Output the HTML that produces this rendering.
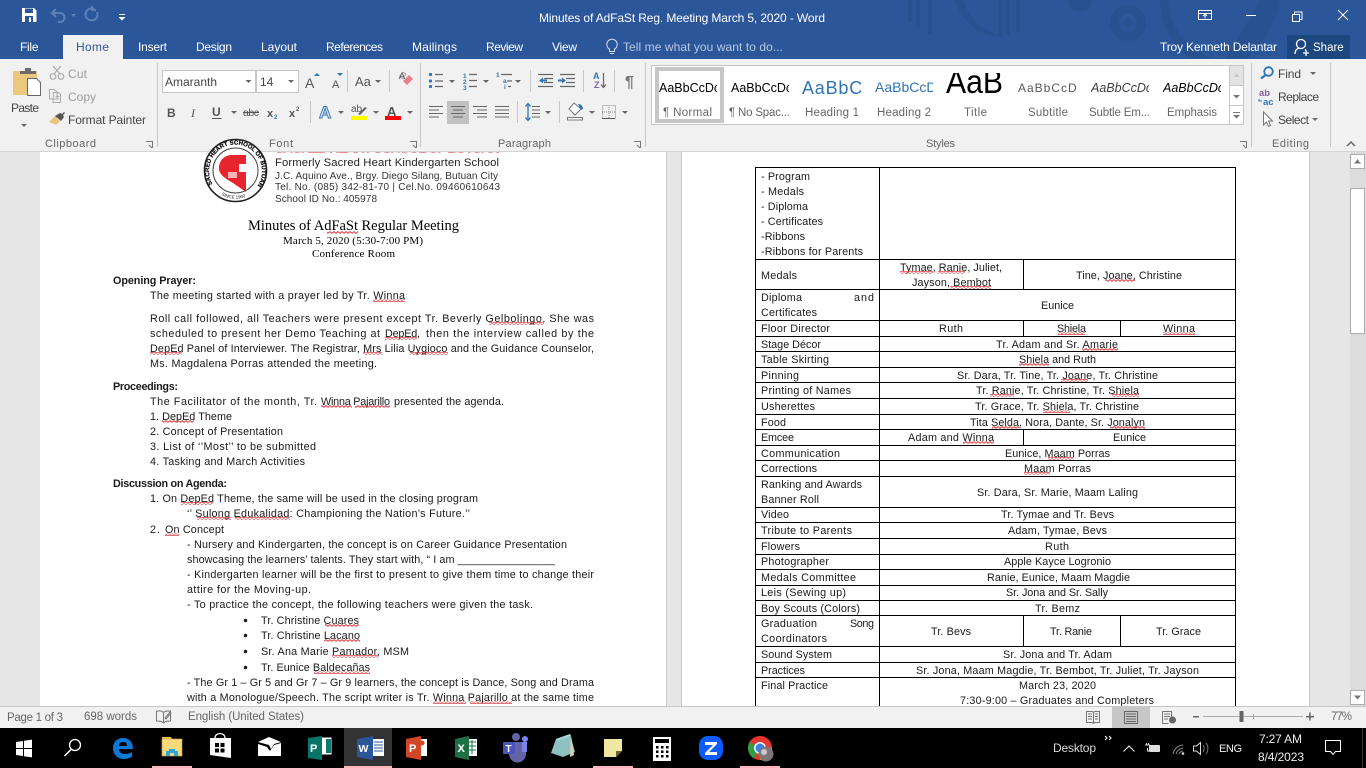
<!DOCTYPE html>
<html><head><meta charset="utf-8"><title>Minutes of AdFaSt Reg. Meeting March 5, 2020 - Word</title>
<style>
html,body{margin:0;padding:0;width:1366px;height:768px;overflow:hidden;background:#e6e6e6}
svg{display:block;font-family:"Liberation Sans",sans-serif}
.d text{font-size:10.8px;fill:#1a1a1a}
.t text{font-size:12px;fill:#fff}
.r text{font-size:12px;fill:#444}
.l text{font-size:11px;fill:#666}
.s text{font-size:11.5px;fill:#666}
.g{stroke:#666;stroke-width:1.2;fill:none}
.b{fill:#2e75b6}
</style></head><body>
<svg width="1366" height="768" viewBox="0 0 1366 768" xmlns="http://www.w3.org/2000/svg">
<defs>
<pattern id="w" width="4" height="3" patternUnits="userSpaceOnUse"><polyline points="0,2.4 2,0.6 4,2.4" fill="none" stroke="#d8262c" stroke-width=".9"/></pattern>
<clipPath id="hc"><rect x="200" y="152" width="320" height="60"/></clipPath>
<path id="ringTop" d="M213 185a26.500 26.500 0 1 1 45 0"/>
<path id="ringBot" d="M212 186a28 28 0 0 0 47 0"/>
</defs>

<!-- Title bar -->
<rect width="1366" height="59" fill="#2b579a"/>
<g fill="#285190">
<rect x="908" y="0" width="4" height="22"/><rect x="916" y="0" width="4" height="28"/><rect x="928" y="0" width="4" height="34"/>
<path d="M955 0h8c6 18 16 28 30 32l6 5c-22-2-38-16-44-37z"/>
<rect x="998" y="0" width="4" height="37"/><rect x="1006" y="0" width="4" height="35"/><rect x="1016" y="0" width="4" height="32"/>
<circle cx="1080" cy="0" r="12"/>
<path d="M1128 5a18 18 0 1 0 .1 0zm0 9a9 9 0 1 1-.1 0z" fill-rule="evenodd"/>
<circle cx="1128" cy="23" r="4.500"/>
<path d="M1160 0h8c2 28 20 52 46 58h-22c-20-10-32-32-32-58zM1260 0h20c-2 16-10 34-22 46l-12 13h-20z"/>
</g>
<!-- QAT -->
<path d="M22 8h12l2.500 2.500V22H22z" fill="#fff"/><rect x="25" y="8.500" width="8" height="4.500" fill="#2b579a"/><rect x="25" y="16" width="8" height="6" fill="#2b579a"/><rect x="29" y="17.500" width="2" height="4.500" fill="#fff"/>
<g fill="none" stroke="#5d80b8" stroke-width="2"><path d="M56 9l-4 4 4 4M52 13h8a4.500 4.500 0 0 1 0 9h-2"/><path d="M97 12a6 6 0 1 1-3-3M92 6v4h4"/></g>
<path d="M71 14h5l-2.500 3z" fill="#5d80b8"/>
<rect x="119" y="14" width="6" height="1" fill="#fff"/><path d="M118.500 17h7l-3.500 3.500z" fill="#fff"/>
<g class="t">
<text x="539" y="22" textLength="286">Minutes of AdFaSt Reg. Meeting March 5, 2020 - Word</text>
<text x="20" y="51" textLength="18.500">File</text>
<text x="138" y="51" textLength="29">Insert</text>
<text x="196" y="51" textLength="36">Design</text>
<text x="261" y="51" textLength="36">Layout</text>
<text x="326" y="51" textLength="57">References</text>
<text x="412" y="51" textLength="45">Mailings</text>
<text x="486" y="51" textLength="37">Review</text>
<text x="552" y="51" textLength="25">View</text>
<text x="623" y="51" textLength="160" style="fill:#b9c9e2">Tell me what you want to do...</text>
<text x="1160" y="51" textLength="117">Troy Kenneth Delantar</text>
</g>
<rect x="63" y="35" width="60" height="24" fill="#f1f1f1"/>
<text x="76" y="51" textLength="33" font-size="12" fill="#2b579a">Home</text>
<g fill="none" stroke="#d4dfef" stroke-width="1"><path d="M609.500 49a5.200 5.200 0 1 1 5 0v2.500h-5zM610 53.500h4"/></g>
<rect x="1287" y="35" width="63" height="24" fill="#1c477f"/>
<text x="1313" y="51" font-size="11.500" fill="#fff">Share</text>
<g fill="none" stroke="#fff" stroke-width="1.300"><circle cx="1301" cy="44" r="4.500"/><path d="M1295 54c0-4 2.500-5.500 4-6M1305 49.500l1 .5M1303 53h6M1306 50v6"/></g>
<!-- Window buttons -->
<g fill="none" stroke="#fff" stroke-width="1"><rect x="1198.500" y="10.500" width="13" height="9"/><path d="M1198.500 13.500h13M1205 18.500v-4M1203 16l2-2 2 2"/><path d="M1246 15.500h10"/><path d="M1292.500 14.500h7v7h-7zM1294.500 14.500v-2.500h7.500v7.500h-2.500"/><path d="M1338 10l10 10M1348 10l-10 10"/></g>

<!-- Ribbon -->
<rect y="59" width="1366" height="92" fill="#f1f1f1"/>
<rect y="151" width="1366" height="1" fill="#d4d4d4"/>
<g fill="#c6c6c6"><rect x="157" y="63" width="1" height="84"/><rect x="420" y="63" width="1" height="84"/><rect x="645" y="63" width="1" height="84"/><rect x="1251" y="63" width="1" height="84"/><rect x="1330" y="63" width="1" height="84"/>
<rect x="347" y="70" width="1" height="22"/><rect x="389" y="70" width="1" height="22"/><rect x="310" y="101" width="1" height="22"/>
<rect x="530" y="70" width="1" height="22"/><rect x="583" y="70" width="1" height="22"/><rect x="614" y="70" width="1" height="22"/><rect x="517" y="101" width="1" height="22"/><rect x="559" y="101" width="1" height="22"/></g>
<!-- Clipboard -->
<rect x="13" y="71" width="24" height="24" rx="1" fill="#ecc77e"/>
<path d="M20 71h5v-3h6v3h5v3H20z" fill="#6b6b6b"/>
<path d="M27.500 78.500h9l4 4v13h-13z" fill="#fff" stroke="#666"/>
<path d="M21 124h6l-3 3z" fill="#666"/>
<g fill="none" stroke="#ababab" stroke-width="1.200"><circle cx="53" cy="76.500" r="2.800"/><circle cx="61" cy="76.500" r="2.800"/><path d="M54 74l7-8M60 74l-7-8"/></g>
<g fill="none" stroke="#ababab"><path d="M49.500 89.500h5l2.500 2.500v7h-7.500zM49.500 89.500v10M53.500 92.500h5l2 2v8h-7.500zM55.500 96.500h4M55.500 99h4"/></g>
<path d="M49 122l6-6 5 5-4 4z" fill="#eac67c"/><path d="M55 116l5-3 2 1 2-2 1 1-2 2 1 2-3 4z" fill="#555"/>
<!-- Font group boxes -->
<rect x="162.500" y="70.500" width="93" height="22" fill="#fff" stroke="#c6c6c6"/>
<rect x="256.500" y="70.500" width="42" height="22" fill="#fff" stroke="#c6c6c6"/>
<g class="r">
<text x="11" y="112" textLength="28">Paste</text>
<text x="68" y="78" textLength="19" style="fill:#9d9d9d">Cut</text>
<text x="68" y="101" textLength="28" style="fill:#9d9d9d">Copy</text>
<text x="68" y="124" textLength="78">Format Painter</text>
<text x="165" y="86" textLength="52">Amaranth</text>
<text x="260" y="86">14</text>
</g>
<g class="l">
<text x="45" y="147" textLength="51">Clipboard</text>
<text x="269" y="147" textLength="24">Font</text>
<text x="498" y="147" textLength="53">Paragraph</text>
<text x="926" y="147" textLength="29">Styles</text>
<text x="1272" y="147" textLength="37">Editing</text>
</g>
<g fill="none" stroke="#777"><path d="M146 141.500h6.500v6.500M149 145l3 3"/><path d="M410 141.500h6.500v6.500M413 145l3 3"/><path d="M634 141.500h6.500v6.500M637 145l3 3"/><path d="M1240 141.500h6.500v6.500M1243 145l3 3"/></g>
<g fill="#666">
<path d="M245.500 80h6l-3 3z"/><path d="M288 80h6l-3 3z"/>
<path d="M375 80h6l-3 3z"/>
<path d="M231 111h6l-3 3z"/><path d="M338 111h6l-3 3z"/><path d="M373 111h6l-3 3z"/><path d="M407 111h6l-3 3z"/>
<path d="M449 80h6l-3 3z"/><path d="M483 80h6l-3 3z"/><path d="M515 80h6l-3 3z"/>
<path d="M545 111h6l-3 3z"/><path d="M589 111h6l-3 3z"/><path d="M622 111h6l-3 3z"/>
<path d="M1310 72h6l-3 3z"/><path d="M1312 118h6l-3 3z"/>
</g>
<g font-weight="400" fill="#555">
<text x="305" y="88" font-size="14">A</text><text x="332" y="88" font-size="11">A</text>
<text x="355" y="86" font-size="13">Aa</text>
<text x="167" y="117" font-size="12" font-weight="700">B</text>
<text x="191" y="117" font-size="12" font-style="italic" font-family="Liberation Serif">I</text>
<text x="212" y="116" font-size="12" font-weight="700">U</text>
<text x="243" y="116" font-size="10.500" textLength="16">abc</text>
<text x="267" y="117" font-size="11" font-weight="700">x</text><text x="274" y="119" font-size="6" fill="#2e75b6" font-weight="700">2</text>
<text x="289" y="117" font-size="11" font-weight="700">x</text><text x="296" y="111" font-size="6" font-weight="700">2</text>
</g>
<rect x="212" y="118" width="9.500" height="1" fill="#555"/>
<rect x="243" y="112" width="16" height="1" fill="#555"/>
<path d="M314 76h6l-3-3zM337 73h6l-3 3z" fill="#2e75b6"/>
<text x="319" y="118" font-size="17" font-weight="700" fill="#dbe8f6" stroke="#2e75b6" stroke-width=".9">A</text>
<text x="351" y="112" font-size="10" fill="#555">ab</text><path d="M358 114l7-7 2 1-7 7z" fill="#666"/><rect x="351" y="116" width="16" height="4" fill="#ff0"/>
<text x="387" y="116" font-size="13" font-weight="700" fill="#555">A</text><rect x="385" y="116" width="16" height="4" fill="#f00"/>
<path d="M403 81l6-6 4 4-6 6z" fill="#e8808b"/><path d="M399 77l4-5 3 2-3 5z" fill="#ddd" stroke="#888" stroke-width=".6"/>
<text x="399" y="79" font-size="9" fill="#555">A</text>
<!-- Paragraph -->
<g class="b"><circle cx="430.500" cy="74.500" r="1.600"/><circle cx="430.500" cy="81" r="1.600"/><circle cx="430.500" cy="86.500" r="1.600"/>
<text x="463" y="78" font-size="6.500" font-weight="700">1</text><text x="463" y="84" font-size="6.500" font-weight="700">2</text><text x="463" y="90" font-size="6.500" font-weight="700">3</text>
<text x="496" y="77" font-size="6.500" font-weight="700">1</text><text x="503" y="83" font-size="6.500" font-weight="700">a</text><text x="504" y="89" font-size="6.500" font-weight="700">i</text></g>
<path d="M435 74.500h8M435 81h8M435 86.500h8M469 74.500h8M469 80.500h8M469 86.500h8M501 74.500h11M507 81h5M508 86.500h3M538 74.500h15M544 78.500h9M544 82.500h9M538 86.500h15M560 74.500h15M566 78.500h9M566 82.500h9M560 86.500h15" class="g" stroke-width="1"/>
<path d="M539 80.500l4-3v2h4v2h-4v2zM566 80.500l-4-3v2h-4v2h4v2z" class="b"/>
<text x="593" y="79" font-size="9" font-weight="700" fill="#2e75b6">A</text><text x="594" y="88" font-size="9" font-weight="700" fill="#8064a2">Z</text>
<path d="M603.500 73v14M601 84.500l2.500 3 2.500-3" class="g"/>
<text x="625" y="87" font-size="16" font-weight="700" fill="#777">¶</text>
<rect x="447" y="101" width="22" height="23" fill="#c2c2c2"/>
<path d="M429 106.500h14M429 110h10M429 113.500h14M429 117h10M451 106.500h14M453 110h10M451 113.500h14M453 117h10M473 106.500h14M477 110h10M473 113.500h14M477 117h10M495 106.500h14M495 110h14M495 113.500h14M495 117h14" stroke="#666" stroke-width="1.100" fill="none"/>
<path d="M532 106.500h8M532 110h8M532 113.500h8M532 117h8" stroke="#666" stroke-width="1.100" fill="none"/>
<path d="M528 104v16M525.500 106.500l2.500-3 2.500 3M525.500 117.500l2.500 3 2.500-3" stroke="#2e75b6" stroke-width="1.300" fill="none"/>
<path d="M574 103l7 6-6 6-6-6zM567.500 117.500h15v2.500h-15z" fill="#fff" stroke="#777"/><path d="M578 104c3 0 5 2 5 5l-2 1z" fill="#2e75b6"/>
<rect x="602.500" y="105.500" width="13" height="13" fill="none" stroke="#888" stroke-dasharray="1 1"/><path d="M609 105v13M602 112h13" stroke="#888" stroke-dasharray="1 1"/><path d="M602 118.500h13" stroke="#555"/>

<!-- Styles gallery -->
<rect x="651.500" y="65.500" width="592" height="59" fill="#fff" stroke="#c6c6c6"/>
<rect x="657" y="69" width="65" height="52" fill="#fff" stroke="#c6c6c6" stroke-width="4"/>
<svg x="659" y="70" width="58" height="30"><text x="0" y="22" font-size="12.500" fill="#000">AaBbCcDc</text></svg>
<svg x="731" y="70" width="58" height="30"><text x="0" y="22" font-size="12.500" fill="#000">AaBbCcDc</text></svg>
<svg x="802" y="70" width="59" height="30"><text x="0" y="24" font-size="18" fill="#2e74b5" textLength="70">AaBbCc</text></svg>
<svg x="875" y="70" width="58" height="30"><text x="0" y="22" font-size="14" fill="#2e74b5">AaBbCcD</text></svg>
<svg x="946" y="73" width="58" height="26"><text x="0" y="20" font-size="33" fill="#000" textLength="57" lengthAdjust="spacingAndGlyphs">AaB</text></svg>
<svg x="1018" y="70" width="59" height="30"><text x="0" y="22" font-size="12" fill="#5a5a5a" letter-spacing="1">AaBbCcD</text></svg>
<svg x="1091" y="70" width="58" height="30"><text x="0" y="22" font-size="12.500" fill="#404040" font-style="italic">AaBbCcDc</text></svg>
<svg x="1163" y="70" width="58" height="30"><text x="0" y="22" font-size="12.500" fill="#000" font-style="italic">AaBbCcDc</text></svg>
<g class="s">
<text x="663" y="116" textLength="49">¶ Normal</text>
<text x="729" y="116" textLength="61">¶ No Spac...</text>
<text x="805" y="116" textLength="54">Heading 1</text>
<text x="877" y="116" textLength="54">Heading 2</text>
<text x="964" y="116" textLength="23">Title</text>
<text x="1028" y="116" textLength="40">Subtitle</text>
<text x="1089" y="116" textLength="61">Subtle Em...</text>
<text x="1167" y="116" textLength="50">Emphasis</text>
</g>
<rect x="1229.500" y="65.500" width="14" height="20" fill="#e3e3e3" stroke="#c6c6c6"/>
<rect x="1229.500" y="85.500" width="14" height="20" fill="#fff" stroke="#c6c6c6"/>
<rect x="1229.500" y="105.500" width="14" height="19" fill="#fff" stroke="#c6c6c6"/>
<path d="M1233.500 77l3-3.500 3 3.500z" fill="#c6c6c6"/><path d="M1233 95h7l-3.500 3.500z" fill="#777"/><path d="M1233 112h7v1h-7zM1233 115h7l-3.500 3.500z" fill="#777"/>
<!-- Editing -->
<circle cx="1268.500" cy="71.500" r="4.300" fill="none" stroke="#2e75b6" stroke-width="1.800"/><path d="M1265.500 75l-4.500 3.500" stroke="#2e75b6" stroke-width="2.200"/>
<g class="r"><text x="1278" y="78" textLength="23">Find</text><text x="1278" y="101" textLength="41">Replace</text><text x="1278" y="124" textLength="31">Select</text></g>
<text x="1259" y="96" font-size="9.500" font-weight="700" fill="#8064a2">ab</text><text x="1263" y="105" font-size="9.500" font-weight="700" fill="#2e75b6">ac</text><path d="M1259 99v2h3" stroke="#2e75b6" fill="none"/>
<path d="M1263.500 112v13l3-3 2 4.500 2-1-2-4.500h4z" fill="#fff" stroke="#777"/>
<path d="M1347 146l4-4 4 4" fill="none" stroke="#666" stroke-width="1.500"/>

<!-- Document area -->
<rect y="152" width="1350" height="555" fill="#e6e6e6"/>
<rect x="40" y="152" width="627" height="555" fill="#fff"/>
<rect x="666" y="152" width="1" height="555" fill="#c9c9c9"/>
<rect x="681" y="152" width="1" height="555" fill="#c9c9c9"/>
<rect x="682" y="152" width="627" height="555" fill="#fff"/>
<rect x="1309" y="152" width="1" height="555" fill="#c9c9c9"/>
<rect x="1350" y="152" width="16" height="555" fill="#dcdcdc"/>
<rect x="1350.500" y="154.500" width="14" height="14" fill="#fff" stroke="#ababab"/><path d="M1353.500 163.500h8l-2-1.500-2-3-2 3z" fill="#777"/>
<rect x="1350.500" y="188.500" width="14" height="145" fill="#fff" stroke="#ababab"/>
<rect x="1350.500" y="690.500" width="14" height="14" fill="#fff" stroke="#ababab"/><path d="M1354 695.500h7l-3.500 4z" fill="#777"/>

<!-- Letterhead -->
<circle cx="235.500" cy="170.500" r="31" fill="#fff" stroke="#222" stroke-width="1.600"/>
<circle cx="235.500" cy="170.500" r="22.500" fill="#fff" stroke="#444" stroke-width="1"/>
<path d="M219 168c0-8 6-13 13-13h14v9h-7v8h7v20l-13-9c-8-5-14-8-14-15z" fill="#e8242e"/>
<rect x="228" y="172" width="9" height="6" fill="#fff" opacity=".65"/>
<text font-size="6" font-weight="700" fill="#111" stroke="#111" stroke-width=".25"><textPath href="#ringTop" startOffset="1">SACRED HEART SCHOOL OF BUTUAN</textPath></text>
<text font-size="4.500" fill="#222"><textPath href="#ringBot" startOffset="13">SINCE 1960</textPath></text>
<g clip-path="url(#hc)"><text x="275" y="153" font-size="14" font-weight="700" fill="#ee4a50" opacity=".65" textLength="225">SACRED HEART SCHOOL OF BUTUAN</text></g>
<g fill="#333"><text x="275" y="166" font-size="11.300" textLength="224" fill="#222">Formerly Sacred Heart Kindergarten School</text>
<text x="275" y="179" font-size="10" textLength="223" font-weight="400">J.C. Aquino Ave., Brgy. Diego Silang, Butuan City</text>
<text x="275" y="190" font-size="10" textLength="225">Tel. No. (085) 342-81-70 | Cel.No. 09460610643</text>
<text x="275" y="202" font-size="10" textLength="102">School ID No.: 405978</text></g>
<g font-family="Liberation Serif" fill="#000">
<text x="248" y="230" font-size="14.500" textLength="211">Minutes of AdFaSt Regular Meeting</text>
<text x="283" y="244" font-size="11" textLength="140">March 5, 2020 (5:30-7:00 PM)</text>
<text x="312" y="257" font-size="11" textLength="83">Conference Room</text>
</g>

<!-- Page 1 -->
<g class="d">
<text x="113" y="284" textLength="83" font-weight="700">Opening Prayer:</text>
<text x="150" y="299" textLength="255">The meeting started with a prayer led by Tr. Winna</text>
<text x="150" y="322" textLength="444">Roll call followed, all Teachers were present except Tr. Beverly Gelbolingo. She was</text>
<text x="150" y="337" textLength="230">scheduled to present her Demo Teaching at</text><text x="385" y="337" textLength="35">DepEd,</text><text x="426" y="337" textLength="168">then the interview called by the</text>
<text x="150" y="352" textLength="444">DepEd Panel of Interviewer. The Registrar, Mrs Lilia Uygioco and the Guidance Counselor,</text>
<text x="150" y="367" textLength="227">Ms. Magdalena Porras attended the meeting.</text>
<text x="113" y="390" textLength="65" font-weight="700">Proceedings:</text>
<text x="150" y="405" textLength="167">The Facilitator of the month, Tr.</text><text x="321" y="405" textLength="69">Winna Pajarillo</text><text x="394" y="405" textLength="110">presented the agenda.</text>
<text x="150" y="420" textLength="82">1. DepEd Theme</text>
<text x="150" y="435" textLength="133">2. Concept of Presentation</text>
<text x="150" y="450" textLength="166">3. List of ‘’Most’’ to be submitted</text>
<text x="150" y="465" textLength="155">4. Tasking and March Activities</text>
<text x="113" y="487" textLength="114" font-weight="700">Discussion on Agenda:</text>
<text x="150" y="502" textLength="328">1. On DepEd Theme, the same will be used in the closing program</text>
<text x="187" y="517" textLength="283">‘’ Sulong Edukalidad: Championing the Nation’s Future.’’</text>
<text x="150" y="533" textLength="10">2.</text><text x="165" y="533" textLength="59">On Concept</text>
<text x="187" y="548" textLength="380">- Nursery and Kindergarten, the concept is on Career Guidance Presentation</text>
<text x="187" y="563" textLength="368">showcasing the learners’ talents. They start with, “ I am ________________</text>
<text x="187" y="578" textLength="407">- Kindergarten learner will be the first to present to give them time to change their</text>
<text x="187" y="593" textLength="124">attire for the Moving-up.</text>
<text x="187" y="608" textLength="346">- To practice the concept, the following teachers were given the task.</text>
<text x="261" y="624" textLength="98">Tr. Christine Cuares</text>
<text x="261" y="639" textLength="99">Tr. Christine Lacano</text>
<text x="261" y="655" textLength="148">Sr. Ana Marie Pamador, MSM</text>
<text x="261" y="671" textLength="109">Tr. Eunice Baldecañas</text>
<text x="187" y="686" textLength="407">- The Gr 1 – Gr 5 and Gr 7 – Gr 9 learners, the concept is Dance, Song and Drama</text>
<text x="187" y="701" textLength="407">with a Monologue/Speech. The script writer is Tr. Winna Pajarillo at the same time</text>
</g>
<g fill="#222"><circle cx="245.500" cy="620.500" r="1.800"/><circle cx="245.500" cy="635.500" r="1.800"/><circle cx="245.500" cy="651.500" r="1.800"/><circle cx="245.500" cy="667.500" r="1.800"/></g>
<g fill="url(#w)">
<rect x="373" y="299" width="32" height="3"/><rect x="489" y="322" width="55" height="3"/><rect x="385" y="337" width="32" height="3"/><rect x="150" y="352" width="32" height="3"/><rect x="363" y="352" width="19" height="3"/><rect x="410" y="352" width="38" height="3"/>
<rect x="321" y="405" width="31" height="3"/><rect x="355" y="405" width="35" height="3"/><rect x="162" y="420" width="32" height="3"/><rect x="181" y="502" width="32" height="3"/><rect x="197" y="517" width="34" height="3"/><rect x="235" y="517" width="55" height="3"/><rect x="165" y="533" width="14" height="3"/>
<rect x="325" y="624" width="34" height="3"/><rect x="324" y="639" width="36" height="3"/><rect x="332" y="655" width="46" height="3"/><rect x="314" y="671" width="56" height="3"/>
<rect x="433" y="701" width="33" height="3"/><rect x="470" y="701" width="42" height="3"/>
<rect x="327" y="231" width="31" height="3"/>
</g>

<!-- Table -->
<g stroke="#000" stroke-width="1" fill="none">
<rect x="755.500" y="167.500" width="480" height="540"/>
<path d="M879.500 167v540M1023.500 259v30M1023.500 320v16M1120.500 320v16M1023.500 429v16M1120.500 615v31M1023.500 615v31"/>
<path d="M755 259.500h481M755 289.500h481M755 320.500h481M755 336.500h481M755 351.500h481M755 367.500h481M755 382.500h481M755 398.500h481M755 414.500h481M755 429.500h481M755 445.500h481M755 460.500h481M755 476.500h481M755 507.500h481M755 522.500h481M755 538.500h481M755 554.500h481M755 569.500h481M755 585.500h481M755 600.500h481M755 615.500h481M755 646.500h481M755 662.500h481M755 677.500h481"/>
</g>
<rect x="750" y="707" width="500" height="1" fill="#fff"/>
<g class="d">
<text x="761" y="180" textLength="49">- Program</text><text x="761" y="195" textLength="43">- Medals</text><text x="761" y="210" textLength="47">- Diploma</text><text x="761" y="225" textLength="62">- Certificates</text><text x="761" y="240" textLength="44">-Ribbons</text><text x="761" y="255" textLength="102">-Ribbons for Parents</text>
<text x="761" y="279" textLength="36">Medals</text>
<text x="761" y="301" textLength="41">Diploma</text><text x="854" y="301" textLength="20">and</text><text x="761" y="316" textLength="56">Certificates</text>
<text x="761" y="332" textLength="69">Floor Director</text><text x="761" y="348" textLength="60">Stage Décor</text><text x="761" y="363" textLength="68">Table Skirting</text><text x="761" y="379" textLength="38">Pinning</text><text x="761" y="394" textLength="90">Printing of Names</text><text x="761" y="410" textLength="54">Usherettes</text><text x="761" y="426" textLength="25">Food</text><text x="761" y="441" textLength="33">Emcee</text><text x="761" y="457" textLength="79">Communication</text><text x="761" y="472" textLength="56">Corrections</text>
<text x="761" y="488" textLength="101">Ranking and Awards</text><text x="761" y="503" textLength="58">Banner Roll</text>
<text x="761" y="518" textLength="28">Video</text><text x="761" y="534" textLength="91">Tribute to Parents</text><text x="761" y="550" textLength="39">Flowers</text><text x="761" y="565" textLength="68">Photographer</text><text x="761" y="581" textLength="95">Medals Committee</text><text x="761" y="596" textLength="85">Leis (Sewing up)</text><text x="761" y="612" textLength="99">Boy Scouts (Colors)</text>
<text x="761" y="627" textLength="56">Graduation</text><text x="850" y="627" textLength="24">Song</text><text x="761" y="642" textLength="66">Coordinators</text>
<text x="761" y="658" textLength="71">Sound System</text><text x="761" y="674" textLength="44">Practices</text><text x="761" y="689" textLength="67">Final Practice</text>

<text x="900" y="271" textLength="102">Tymae, Ranie, Juliet,</text><text x="912" y="286" textLength="79">Jayson, Bembot</text><text x="1076" y="279" textLength="106">Tine, Joane, Christine</text>
<text x="1041" y="309" textLength="33">Eunice</text>
<text x="939" y="332" textLength="24">Ruth</text><text x="1057" y="332" textLength="29">Shiela</text><text x="1163" y="332" textLength="32">Winna</text>
<text x="996" y="348" textLength="122">Tr. Adam and Sr. Amarie</text>
<text x="1019" y="363" textLength="77">Shiela and Ruth</text>
<text x="957" y="379" textLength="201">Sr. Dara, Tr. Tine, Tr. Joane, Tr. Christine</text>
<text x="976" y="394" textLength="163">Tr. Ranie, Tr. Christine, Tr. Shiela</text>
<text x="975" y="410" textLength="164">Tr. Grace, Tr. Shiela, Tr. Christine</text>
<text x="970" y="426" textLength="175">Tita Selda, Nora, Dante, Sr. Jonalyn</text>
<text x="908" y="441" textLength="86">Adam and Winna</text><text x="1113" y="441" textLength="33">Eunice</text>
<text x="1005" y="457" textLength="105">Eunice, Maam Porras</text>
<text x="1024" y="472" textLength="67">Maam Porras</text>
<text x="977" y="496" textLength="161">Sr. Dara, Sr. Marie, Maam Laling</text>
<text x="1001" y="518" textLength="113">Tr. Tymae and Tr. Bevs</text>
<text x="1008" y="534" textLength="99">Adam, Tymae, Bevs</text>
<text x="1045" y="550" textLength="24">Ruth</text>
<text x="1004" y="565" textLength="107">Apple Kayce Logronio</text>
<text x="987" y="581" textLength="143">Ranie, Eunice, Maam Magdie</text>
<text x="1006" y="596" textLength="102">Sr. Jona and Sr. Sally</text>
<text x="1035" y="612" textLength="45">Tr. Bemz</text>
<text x="931" y="635" textLength="40">Tr. Bevs</text><text x="1050" y="635" textLength="42">Tr. Ranie</text><text x="1156" y="635" textLength="45">Tr. Grace</text>
<text x="1003" y="658" textLength="109">Sr. Jona and Tr. Adam</text>
<text x="916" y="674" textLength="283">Sr. Jona, Maam Magdie, Tr. Bembot, Tr. Juliet, Tr. Jayson</text>
<text x="1019" y="689" textLength="77">March 23, 2020</text>
<text x="960" y="704" textLength="194">7:30-9:00 – Graduates and Completers</text>
</g>
<g fill="url(#w)">
<rect x="900" y="271" width="33" height="3"/><rect x="938" y="271" width="27" height="3"/><rect x="950" y="286" width="41" height="3"/><rect x="1105" y="279" width="30" height="3"/>
<rect x="1058" y="332" width="27" height="3"/><rect x="1163" y="332" width="32" height="3"/><rect x="1082" y="348" width="36" height="3"/><rect x="1019" y="363" width="30" height="3"/>
<rect x="1061" y="379" width="27" height="3"/><rect x="990" y="394" width="24" height="3"/><rect x="1112" y="394" width="27" height="3"/><rect x="1043" y="410" width="27" height="3"/>
<rect x="992" y="426" width="28" height="3"/><rect x="1110" y="426" width="35" height="3"/><rect x="963" y="441" width="31" height="3"/><rect x="1048" y="457" width="26" height="3"/><rect x="1024" y="472" width="26" height="3"/>
</g>

<!-- Status bar -->
<rect y="706" width="1366" height="1" fill="#c6c6c6"/>
<rect y="707" width="1366" height="21" fill="#f1f1f1"/>
<g class="s" font-size="11.500">
<text x="7" y="721" textLength="56">Page 1 of 3</text>
<text x="84" y="720" textLength="53">698 words</text>
<text x="188" y="720" textLength="116">English (United States)</text>
<text x="1331" y="720" textLength="21">77%</text>
</g>
<path d="M156.500 711.500c2-1 5-1 7 1 1-1 3-1.500 4-1.500l3 0v10c-3 0-5 0-7 2-2-2-4-2-7-2z" fill="none" stroke="#777"/><path d="M163.500 713v9M165 718l5-6 1 1-5 6z" stroke="#777" fill="none"/>
<rect x="1112" y="707" width="38" height="21" fill="#c6c6c6"/>
<path d="M1086.500 711.500h6l1 1 1-1h5v11h-5l-1 1-1-1h-6zM1093.500 712v11M1088 714h4M1088 716.500h4M1088 719h4M1095 714h3M1095 716.500h3M1095 719h3" fill="none" stroke="#777"/>
<rect x="1124.500" y="711.500" width="13" height="12" fill="none" stroke="#666"/><path d="M1126 714h10M1126 716.500h10M1126 719h10M1126 721.500h10" stroke="#666"/>
<path d="M1162.500 711.500h9v6M1162.500 711.500v12h6M1164 714h6M1164 716.500h6M1164 719h4" fill="none" stroke="#777"/><circle cx="1172.500" cy="720" r="3.500" fill="#666"/>
<rect x="1193" y="716" width="6" height="1.500" fill="#666"/>
<rect x="1203" y="716" width="100" height="1" fill="#ababab"/>
<rect x="1253" y="714" width="1" height="5" fill="#ababab"/>
<rect x="1239.500" y="711" width="4" height="11" fill="#666"/>
<path d="M1306 716h8v1.500h-8zM1309.200 712.500h1.500v8h-1.500z" fill="#666"/>

<!-- Taskbar -->
<rect y="728" width="1366" height="40" fill="#000"/>
<rect x="344" y="728" width="48" height="40" fill="#333"/>
<g fill="#ffb3ba"><rect x="152" y="766" width="40" height="2"/><rect x="344" y="766" width="48" height="2"/><rect x="593" y="766" width="40" height="2"/><rect x="740" y="766" width="40" height="2"/></g>
<path d="M16 742l7-1v7h-7zM24 740.800l8-1.200v8.400h-8zM16 749h7v7l-7-1zM24 749h8v8.400l-8-1.200z" fill="#fff"/>
<circle cx="75" cy="745" r="5.500" fill="none" stroke="#fff" stroke-width="1.300"/><path d="M71 749.500l-6.500 6.500" stroke="#fff" stroke-width="1.500"/>
<path d="M113 748c0-6 4-10 10-10 7 0 10 5 10 11h-14c0 3 2 5 6 5 3 0 5-1 7-2v5c-3 1-5 2-8 2-7 0-11-5-11-11zm6-2h8c0-3-1-4-4-4s-4 2-4 4z" fill="#0a78d4" fill-rule="evenodd"/>
<rect x="162" y="739" width="20" height="17" fill="#f6d97c" stroke="#c9a44e" stroke-width=".6"/><path d="M162 739v-2h9l1 2z" fill="#e9b949"/><path d="M166 756v-5h3v-2h6v2h3v5h-4v-3h-4v3z" fill="#29a8df"/>
<path d="M210 738h21v20l-21-3z" fill="#fff"/><path d="M215 738c0-6 10-6 10 0" fill="none" stroke="#fff" stroke-width="1.300"/><path d="M215 743h4v4h-4zM220.500 743h4v4h-4zM215 748.500h4v4h-4zM220.500 748.500h4v4h-4z" fill="#000"/>
<path d="M258 742l11-5 12 5-7 2-3 5-2-4zM258 744l9 3 3 4 4-6 7-2v13h-23z" fill="#fff"/>
<rect x="318" y="738" width="13" height="16" fill="#fff" stroke="#fff"/><path d="M326 739h5v14h-5z" fill="#0e7a6c"/>
<path d="M308 738l14-2v24l-14-2z" fill="#077568"/><text x="310" y="752" font-size="11" font-weight="700" fill="#fff">P</text>
<rect x="372" y="739" width="12" height="17" fill="#fff"/><path d="M374 742h9M374 745h9M374 748h9M374 751h9" stroke="#2b579a"/>
<path d="M357 739l16-3v24l-16-3z" fill="#2b579a"/><text x="358.500" y="752" font-size="10.500" font-weight="700" fill="#fff">W</text>
<rect x="418" y="739" width="9" height="17" fill="#fff"/><circle cx="422" cy="743" r="2.500" fill="#d24726"/>
<path d="M406 739l15-3v24l-15-3z" fill="#d24726"/><text x="409" y="752" font-size="11" font-weight="700" fill="#fff">P</text>
<rect x="466" y="739" width="11" height="17" fill="#fff"/><path d="M468 742h8M468 746h8M468 750h8M472 740v14" stroke="#1d7144"/>
<path d="M455 739l14-3v24l-14-3z" fill="#1d7144"/><text x="457.500" y="752" font-size="11" font-weight="700" fill="#fff">X</text>
<circle cx="516" cy="737" r="4" fill="#6264a7"/><circle cx="525" cy="739" r="3" fill="#7b83eb"/><path d="M509 742h17v12a8 8 0 0 1-17 0z" fill="#6264a7"/><path d="M522 742h5v10h-5z" fill="#7b83eb"/>
<rect x="503" y="742" width="12" height="12" rx="1" fill="#4b53bc"/><text x="505.500" y="752" font-size="10" font-weight="700" fill="#fff">T</text>
<path d="M556 739l14-5 5 18-12 5-12-4z" fill="#8fc1c0"/><path d="M571 735l3 20-4 2z" fill="#d9d0b2"/><path d="M556 739l14-5 1 2-14 5z" fill="#a9d6d6"/>
<path d="M604 739h18v12l-6 6h-12z" fill="#f2e7a0"/><path d="M616 757v-6h6z" fill="#6b5f3d"/>
<rect x="653" y="737" width="18" height="24" fill="#fff"/><rect x="655" y="739" width="14" height="4" fill="#000"/>
<g fill="#000"><rect x="656" y="746" width="2.500" height="2.500"/><rect x="661" y="746" width="2.500" height="2.500"/><rect x="666" y="746" width="2.500" height="2.500"/><rect x="656" y="750.500" width="2.500" height="2.500"/><rect x="661" y="750.500" width="2.500" height="2.500"/><rect x="666" y="750.500" width="2.500" height="2.500"/><rect x="656" y="755" width="2.500" height="2.500"/><rect x="661" y="755" width="2.500" height="2.500"/><rect x="666" y="755" width="2.500" height="2.500"/></g>
<rect x="699" y="736" width="24" height="24" rx="9" fill="#0b5cff"/><path d="M705 742h12v2l-8 8h8v3h-12v-2l8-8h-8z" fill="#fff"/>
<circle cx="760" cy="748" r="12" fill="#e6372f"/><path d="M760 748l-10.400-6a12 12 0 0 0 4.400 16.400z" fill="#2f9e44"/><path d="M760 748l12-0a12 12 0 0 1-6 10.400l-6 1.600z" fill="#f4c20d"/><circle cx="760" cy="748" r="5.200" fill="#3a80ea" stroke="#fff" stroke-width="1.500"/>
<circle cx="766" cy="754" r="7.500" fill="#7d7578"/><circle cx="764" cy="752" r="3" fill="#cfc8ca"/>
<g font-size="12" fill="#d8d8d8">
<text x="1053" y="752" textLength="43">Desktop</text>
<text x="1219" y="752" textLength="23" fill="#eee" font-size="11">ENG</text>
<text x="1259" y="743" textLength="43" fill="#eee">7:27 AM</text>
<text x="1258" y="761" textLength="46" fill="#eee">8/4/2023</text>
</g>
<path d="M1105 736l2 2-2 2M1109 736l2 2-2 2" fill="none" stroke="#fff"/>
<path d="M1123.500 751.500l5.500-5.500 5.500 5.500" fill="none" stroke="#ddd" stroke-width="1.200"/>
<rect x="1149" y="745" width="11" height="7" rx="1" fill="#ddd"/><path d="M1145 745h5M1146.500 743v2M1148.500 743v2M1147.500 748v3h2" stroke="#ddd" fill="none"/>
<path d="M1173 754a11 11 0 0 1 10-9M1176 754a8 8 0 0 1 7-6M1179 754a5 5 0 0 1 4-3" fill="none" stroke="#8a8a8a"/><circle cx="1183" cy="753.500" r="1.300" fill="#ddd"/>
<path d="M1193.500 746h3l4-3.500v12l-4-3.500h-3z" fill="none" stroke="#ddd"/><path d="M1203 745c1.500 2 1.500 5 0 7M1206 743c2.500 3 2.500 8 0 11" fill="none" stroke="#777"/>
<path d="M1325.500 740.500h15v11h-5l-2.500 3-2.500-3h-5z" fill="none" stroke="#fff" stroke-width="1"/>
<rect x="1362" y="728" width="1" height="40" fill="#333"/>
</svg>
</body></html>
